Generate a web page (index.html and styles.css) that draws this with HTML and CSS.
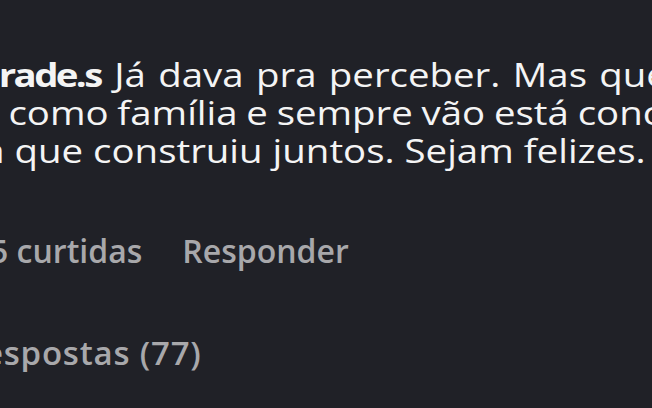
FILE: index.html
```html
<!DOCTYPE html>
<html lang="pt-BR">
<head>
<meta charset="utf-8">
<title>Comentário</title>
<link rel="stylesheet" href="styles.css">
</head>
<body>
<div class="comment">
  <div class="text">
    <div class="line l1"><span class="user">rade.s</span> Já dava pra perceber. Mas que</div>
    <div class="line l2">como família e sempre vão está conc</div>
    <div class="line l3">a que construiu juntos. Sejam felizes.</div>
  </div>
  <div class="meta">
    <span class="likes">5 curtidas</span>
    <span class="reply">Responder</span>
  </div>
  <div class="replies">Respostas (77)</div>
</div>
</body>
</html>
```

FILE: styles.css
```css
html, body {
  margin: 0;
  padding: 0;
  background: #202127;
  width: 652px;
  height: 408px;
  overflow: hidden;
}
.comment {
  font-family: "Open Sans", "Noto Sans", sans-serif;
  font-size: 32px;
  line-height: 38px;
  padding-top: 56px;
  overflow: hidden;
}
.text {
  color: #f4f4f4;
  transform: scaleX(1.2);
  transform-origin: 0 0;
}
.line {
  white-space: nowrap;
}
.user {
  font-weight: 700;
  letter-spacing: -2.2px;
  margin-right: 1px;
}
.l1 { margin-left: -1px; word-spacing: 2px; }
.l2 { margin-left: 7px; word-spacing: -1px; }
.l3 { margin-left: -14px; }
.meta {
  display: flex;
  gap: 40px;
  margin-top: 62px;
  margin-left: -10px;
  color: #a8a8ab;
  font-weight: 600;
  white-space: nowrap;
}
.replies {
  margin-top: 64px;
  margin-left: -38px;
  color: #a8a8ab;
  font-weight: 600;
  font-size: 33px;
  letter-spacing: 0.8px;
  white-space: nowrap;
}
```
